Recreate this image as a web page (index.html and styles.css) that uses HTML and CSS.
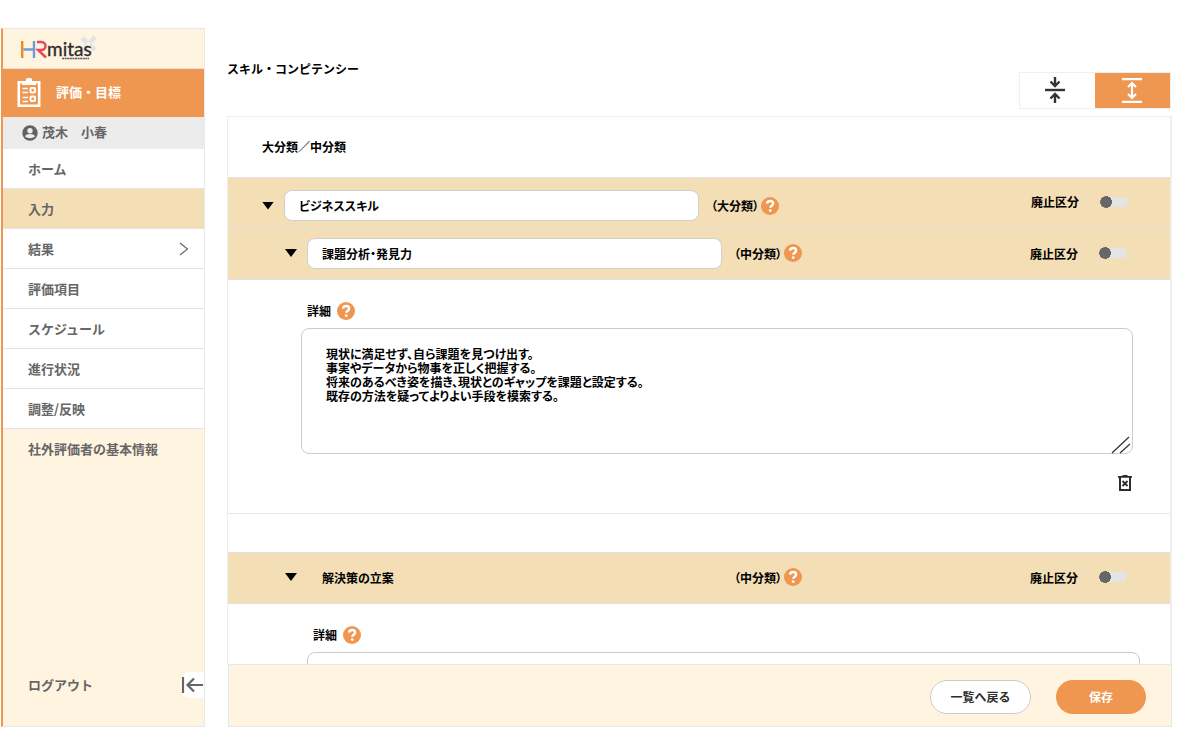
FILE: index.html
```html
<!DOCTYPE html>
<html lang="ja">
<head>
<meta charset="utf-8">
<title>HRmitas</title>
<link rel="stylesheet" href="styles.css">
</head>
<body>
<svg class="defs" aria-hidden="true">
  <symbol id="help" viewBox="0 0 18 18"><circle cx="9" cy="9" r="9" fill="#ef9650"/><path d="M6 6.600C6.200 4.800 7.500 4 9.100 4c1.700 0 3 .9 3 2.500 0 2.200-2.800 2.200-2.800 4.300" fill="none" stroke="#fff" stroke-width="2.400"/><circle cx="9.200" cy="13.600" r="1.400" fill="#fff"/></symbol>
</svg>
<div class="app">
  <aside class="sidebar">
    <div class="logo">
      <svg width="78" height="28" viewBox="0 0 78 28" role="img" aria-label="HRmitas">
        <path d="M62 4l13 12M75 3L62 17" stroke="#e1e3e8" stroke-width="4.500"/>
        <path d="M68.500 7.500l2.500 2.500-2.500 2.500-2.500-2.500z" fill="#fff4e0"/>
        <path d="M2.200 7v17" stroke="#f08a24" stroke-width="2.400"/>
        <path d="M3.400 15.500H14M14 7v17" stroke="#6f9bd6" stroke-width="2.400" fill="none"/>
        <path d="M17 8h4.500a4 4 0 0 1 0 8H18l8 7.500" stroke="#e8455c" stroke-width="2.400" fill="none"/>
        <text class="logo-text" x="27" y="22">mitas</text>
        <path d="M42 24.500h27" stroke="#555" stroke-width="1.500" stroke-dasharray="2 .6"/>
      </svg>
    </div>
    <div class="section">
      <svg width="24" height="30" viewBox="0 0 24 30" fill="none" stroke="#fff" stroke-width="2">
        <path d="M5 4.300H1.800v23.400h20.400V4.300H19" stroke-width="2.600"/><path d="M5 3h4V1.500Q9 0 10.500 0h3Q15 0 15 1.500V3h4v4H5z" fill="#fff" stroke="none"/>
        <path d="M5.500 10.500H11M5.500 14.500H11M5.500 19.500H11M5.500 23.500H11" stroke-width="1.700"/><rect x="13.500" y="10" width="4.500" height="4.500" rx="1"/><rect x="13.500" y="18.500" width="4.500" height="4.500" rx="1"/>
      </svg>
      <span>評価・目標</span>
    </div>
    <div class="user">
      <svg width="16" height="16" viewBox="0 0 16 16"><circle cx="8" cy="8" r="7.700" fill="#626262"/><circle cx="8" cy="5.800" r="2.700" fill="#ececec"/><path d="M3 11.600Q3.500 9 8 9t5 2.600Q11 13.300 8 13.300T3 11.600z" fill="#ececec"/></svg>
      <span>茂木　小春</span>
    </div>
    <nav class="nav">
      <a href="#">ホーム</a>
      <a href="#" class="active">入力</a>
      <a href="#">結果<svg width="10" height="14" viewBox="0 0 10 14" fill="none" stroke="#666" stroke-width="1.200"><path d="M1 1l7.500 6L1 13"/></svg></a>
      <a href="#">評価項目</a>
      <a href="#">スケジュール</a>
      <a href="#">進行状況</a>
      <a href="#">調整/反映</a>
      <a href="#" class="plain">社外評価者の基本情報</a>
    </nav>
    <div class="side-foot">
      <a href="#">ログアウト</a>
      <button class="collapse" aria-label="メニューを閉じる"><svg width="22" height="18" viewBox="0 0 22 18" fill="none" stroke="#666" stroke-width="2.200"><path d="M2 1v16M22 9H6M13 2.500L6.500 9l6.500 6.500"/></svg></button>
    </div>
  </aside>
  <main class="main">
    <header class="top">
      <h1>スキル・コンピテンシー</h1>
      <div class="view">
        <button aria-label="すべて閉じる"><svg width="20" height="26" viewBox="0 0 20 26" fill="none" stroke="#333" stroke-width="2.400"><path d="M0 13h20"/><path d="M10 0v8M5.500 4.500L10 9l4.500-4.500M10 26v-8M5.500 21.500L10 17l4.500 4.500"/></svg></button>
        <button class="on" aria-label="すべて開く"><svg width="20" height="26" viewBox="0 0 20 26" fill="none" stroke="#fff" stroke-width="2.200"><path d="M0 1.200h20M0 23.800h20M10 5v15M6 9l4-4 4 4M6 16l4 4 4-4"/></svg></button>
      </div>
    </header>
    <div class="panel">
      <h2>大分類／中分類</h2>
      <div class="row major">
        <button class="tri" aria-label="開閉"></button>
        <input class="name" type="text" value="ビジネススキル" aria-label="大分類">
        <span class="kind">（大分類）</span><svg class="help"><use href="#help"/></svg>
        <label class="switch">廃止区分<input type="checkbox"></label>
      </div>
      <div class="row sub">
        <button class="tri" aria-label="開閉"></button>
        <input class="name" type="text" value="課題分析・発見力" aria-label="中分類">
        <span class="kind">（中分類）</span><svg class="help"><use href="#help"/></svg>
        <label class="switch">廃止区分<input type="checkbox"></label>
      </div>
      <section class="detail">
        <div class="caption"><label for="d1">詳細</label><svg class="help"><use href="#help"/></svg></div>
        <div class="box">
          <textarea id="d1">現状に満足せず、自ら課題を見つけ出す。
事実やデータから物事を正しく把握する。
将来のあるべき姿を描き、現状とのギャップを課題と設定する。
既存の方法を疑ってよりよい手段を模索する。</textarea>
          <svg class="grip" width="20" height="18" viewBox="0 0 20 18" stroke="#333" stroke-width="1.200"><path d="M1 17L18 1M9 17l10-9"/></svg>
        </div>
        <div class="tools"><button aria-label="削除"><svg width="14" height="16" viewBox="0 0 14 16" fill="none" stroke="#2d2d2d"><path d="M0 1.800h14M4.500 1h5" stroke-width="1.800"/><path d="M2 2v13h10V2" stroke-width="2"/><path d="M4.500 6l5 5M9.500 6l-5 5" stroke-width="1.800"/></svg></button></div>
      </section>
      <div class="row sub gap">
        <button class="tri" aria-label="開閉"></button>
        <span class="name static">解決策の立案</span>
        <span class="kind">（中分類）</span><svg class="help"><use href="#help"/></svg>
        <label class="switch">廃止区分<input type="checkbox"></label>
      </div>
      <section class="detail next">
        <div class="caption"><label for="d2">詳細</label><svg class="help"><use href="#help"/></svg></div>
        <div class="box"><textarea id="d2"></textarea></div>
      </section>
    </div>
    <footer class="actions">
      <button class="back">一覧へ戻る</button>
      <button class="save">保存</button>
    </footer>
  </main>
</div>
</body>
</html>
```
FILE: styles.css
```css
* { box-sizing: border-box; }
body, h1, h2 { margin: 0; }
body, button, input, textarea {
  font-family: "Noto Sans CJK JP", sans-serif;
  font-size: 12px;
  font-weight: 700;
  color: #000;
}
button { border: 0; padding: 0; background: none; display: flex; align-items: center; justify-content: center; }
a { text-decoration: none; color: inherit; }
svg { flex: none; display: block; }
.defs { position: absolute; width: 0; height: 0; }

.app { display: flex; height: 100vh; padding: 28px 29px 24px 1px; gap: 22px; background: #fff; }

.sidebar {
  width: 204px;
  flex: none;
  display: flex;
  flex-direction: column;
  background: #fff4e0;
  border: 1px solid #e8e8e8;
  border-left: 2px solid #ef9650;
  color: #666;
  font-size: 13px;
}
.logo { height: 40px; padding: 5px 0 0 17px; border-bottom: 1px solid #e2e2e2; }
.logo-text { font-family: Lato, sans-serif; font-size: 19px; font-weight: 400; fill: #2c2c2c; stroke: #2c2c2c; stroke-width: .3px; }
.section { height: 48px; display: flex; align-items: center; gap: 15px; padding: 0 0 0 14px; background: #ef9650; color: #fff; }
.section span, .user span { padding-bottom: 3px; }
.user { height: 32px; display: flex; align-items: center; gap: 4px; padding: 0 0 1px 19px; background: #ececec; }
.nav a {
  height: 40px;
  display: flex;
  align-items: center;
  justify-content: space-between;
  padding: 0 15px 0 25px;
  background: #fff;
  border-bottom: 1px solid #e4e4e4;
}
.nav a.active { background: #f3deb5; }
.nav a.plain { background: none; border-color: transparent; }
.side-foot { margin-top: auto; margin-bottom: 28px; display: flex; align-items: center; justify-content: space-between; padding-left: 25px; }
.side-foot a { padding-bottom: 2px; }
.collapse { width: 24px; height: 26px; border-radius: 10px 0 0 10px; background: #fff; }

.main { flex: 1; min-width: 0; display: flex; flex-direction: column; }
.top { display: flex; justify-content: space-between; height: 88px; flex: none; }
h1 { font-size: 12px; line-height: 18px; padding-top: 32px; }
.view { display: flex; margin: 44px 1px 7px 0; border: 1px solid #efefef; }
.view button { width: 75px; padding-right: 2px; }
.view button:first-child { padding-right: 6px; padding-bottom: 2px; }
.view .on { background: #ef9650; }

.panel { flex: 1; min-height: 0; overflow: hidden; border: solid #eee; border-width: 1px 2px 0 1px; }
h2 { font-size: 12px; line-height: 60px; padding-left: 34px; font-feature-settings: "palt"; }
.row {
  height: 51px;
  display: flex;
  align-items: center;
  padding: 0 42px 0 34px;
  background: #f3deb5;
  border-top: 1px solid #e2e2e2;
  font-feature-settings: "palt";
}
.row.major { padding-top: 5px; }
.row.major .switch { margin-bottom: 8px; }
.row.sub { padding: 0 43px 2px 57px; border-bottom: 1px solid #e2e2e2; height: 52px; }
.row.gap { margin-top: 38px; }
.tri { width: 12px; height: 8px; background: #000; clip-path: polygon(0 0, 100% 0, 50% 100%); }
.name {
  width: 415px;
  height: 31px;
  margin-left: 10px;
  padding: 0 14px;
  border: 1px solid #d0d0d0;
  border-radius: 8px;
  background: #fff;
  font-feature-settings: "palt";
}
.name.static { line-height: 29px; background: none; border-color: transparent; }
.kind { margin-left: 12px; }
.help { width: 18px; height: 18px; margin-left: 2px; }
.switch { margin-left: auto; display: flex; align-items: center; gap: 21px; }
.switch input {
  appearance: none;
  width: 28px;
  height: 12px;
  margin: 0;
  border-radius: 6px;
  background: radial-gradient(circle at 6px 6px, #666 6px, transparent 6px), linear-gradient(#e4e4e4, #e4e4e4) 0 1px / 28px 10px no-repeat;
}
.detail { padding: 22px 37px 22px 73px; border-bottom: 1px solid #e8e8e8; }
.caption { display: flex; align-items: center; padding-left: 6px; line-height: 18px; }
.caption .help { margin-left: 6px; }
.box { position: relative; margin-top: 8px; }
textarea {
  display: block;
  width: 100%;
  height: 126px;
  padding: 18px 24px;
  border: 1px solid #ccc;
  border-radius: 8px;
  resize: none;
  line-height: 14px;
  font-feature-settings: "palt";
}
.grip { position: absolute; right: 2px; bottom: 0; }
.tools { display: flex; justify-content: flex-end; padding: 21px 1px 0 0; }
.detail.next { padding-left: 79px; padding-right: 30px; }

.actions {
  flex: none;
  height: 63px;
  display: flex;
  align-items: center;
  justify-content: flex-end;
  gap: 25px;
  margin-left: 1px;
  padding: 2px 25px 0;
  background: #fff4e0;
  border: 1px solid #e8e8e8;
}
.actions button { height: 34px; border-radius: 17px; }
.back { width: 101px; background: #fff; border: 1px solid #ccc; color: #2d2d2d; }
.save { width: 90px; background: #ef9650; color: #fff; }
```
